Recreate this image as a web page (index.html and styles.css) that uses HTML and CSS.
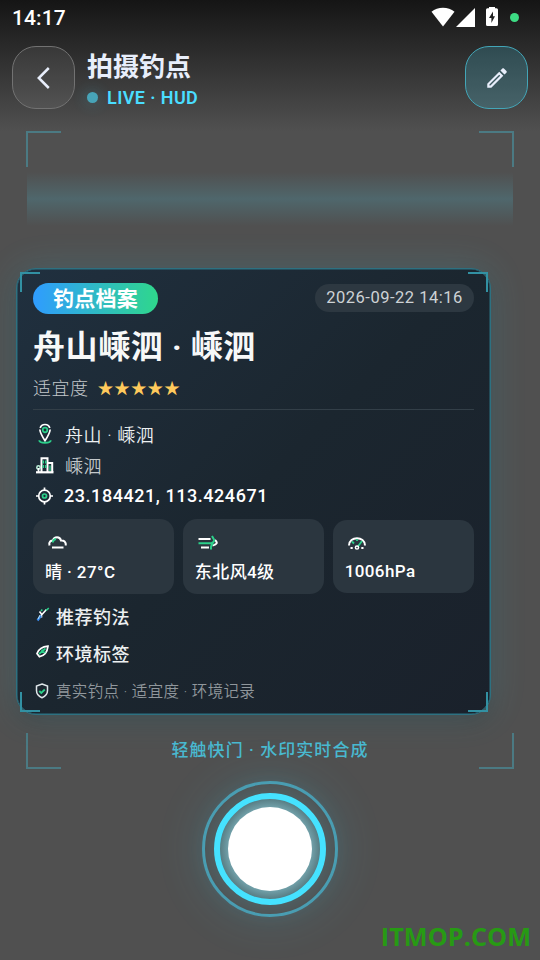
FILE: index.html
```html
<!DOCTYPE html>
<html lang="zh-CN">
<head>
<meta charset="utf-8">
<title>拍摄钓点</title>
<link rel="stylesheet" href="styles.css">
</head>
<body>
<div class="screen">
  <div class="status">
    <span class="time">14:17</span>
    <div class="status-icons">
      <svg class="wifi" width="24" height="20" viewBox="0 0 24 20"><path d="M12 19.500.5 4.800C3.700 2.200 7.600.8 12 .8s8.300 1.400 11.500 4z" fill="#fff"/></svg>
      <svg class="signal" width="19" height="19" viewBox="0 0 19 19"><path d="M0 19 19 0v19z" fill="#fff"/></svg>
      <svg class="battery" width="12" height="20" viewBox="0 0 12 20"><path d="M3 1.200V0h6v1.200h1.500Q12 1.200 12 2.700v14.800q0 1.500-1.500 1.500h-9Q0 19 0 17.500V2.700Q0 1.200 1.500 1.200z" fill="#fff"/><path d="M7 4.500 3 11h2.400v5L9 9.300H7z" fill="#222"/></svg>
      <i class="privacy"></i>
    </div>
  </div>
  <header class="topbar">
    <div class="btn"><svg width="24" height="24" viewBox="0 0 24 24"><path d="M16.800 2 6.800 12l10 10" fill="none" stroke="#e8eefb" stroke-width="2.500"/></svg></div>
    <div class="heading">
      <h1>拍摄钓点</h1>
      <div class="live"><i></i><span>LIVE · HUD</span></div>
    </div>
    <div class="btn edit"><svg width="26" height="26" viewBox="0 0 24 24"><path fill="#e8eefb" d="m14.060 9.020.92.92L5.920 19H5v-.92zM17.660 3c-.25 0-.51.1-.7.290l-1.830 1.830 3.750 3.750 1.830-1.830a1 1 0 0 0 0-1.410l-2.340-2.340c-.2-.2-.45-.29-.71-.29m-3.600 3.190L3 17.250V21h3.750L17.810 9.940z"/></svg></div>
  </header>
  <main class="finder">
    <i class="corner tl"></i><i class="corner tr"></i><i class="corner bl"></i><i class="corner br"></i>
    <div class="scan"></div>
    <section class="card">
      <i class="mark tl"></i><i class="mark tr"></i><i class="mark bl"></i><i class="mark br"></i>
      <div class="chips"><span class="chip">钓点档案</span><span class="date">2026-09-22 14:16</span></div>
      <h2>舟山嵊泗 · 嵊泗</h2>
      <div class="rating"><span>适宜度</span><span class="stars">★★★★★</span></div>
      <div class="row"><svg width="22" height="22" viewBox="0 0 22 22" fill="none" stroke-width="1.700"><path d="M6.200 5C7.500.3 14.500.3 15.800 5M5.800 6.500Q6.300 10.500 11 17.800 15.700 10.500 16.200 6.500" stroke="#fff"/><circle cx="11" cy="7" r="2.300" stroke="#2bd08a"/><path d="M5.300 17.300q0 2.500 5.700 2.500t5.700-2.500" stroke="#2bd08a" stroke-width="1.900"/></svg><span>舟山 · 嵊泗</span></div>
      <div class="row dim"><svg width="22" height="22" viewBox="0 0 22 22" fill="none" stroke-width="1.700"><path d="M2 18.300h17.500" stroke="#fff" stroke-width="2.200"/><path d="M7.500 18V4.200h6V18M13.500 9h4.700V18" stroke="#fff" stroke-width="2"/><path d="M9.300 6.500v8M11.800 6.500v8" stroke="#2bd08a" stroke-width="1.500" stroke-dasharray="3 1.500"/><path d="M16 11.500V17" stroke="#2bd08a" stroke-width="1.300"/><circle cx="4.500" cy="13.500" r="1.700" stroke="#bdf0d9" stroke-width="1.500"/><path d="M4.500 14v4" stroke="#fff"/></svg><span>嵊泗</span></div>
      <div class="row coords"><svg width="22" height="22" viewBox="0 0 22 22" fill="none" stroke-width="1.700"><circle cx="10.500" cy="11" r="5.800" stroke="#fff"/><path d="M10.500 2.500v3M10.500 16.500v3M2 11h3M16 11h3" stroke="#fff"/><circle cx="10.500" cy="11" r="2" stroke="#2bd08a"/></svg><span>23.184421, 113.424671</span></div>
      <div class="tiles">
        <div class="tile"><svg width="24" height="22" viewBox="0 0 24 22" fill="none" stroke-width="2"><path d="M4.500 13.500C3.500 9.500 6 8.500 8 8.500c1-4.500 7-4.500 8 0 3-.3 5 1.500 4.800 5M7 15.500h11.500" stroke="#fff"/><path d="M7.800 10.500Q8 7.500 11 7" stroke="#2bd08a"/></svg><span>晴 · 27°C</span></div>
        <div class="tile"><svg width="24" height="22" viewBox="0 0 24 22" fill="none" stroke-width="2"><path d="M3.500 7h12M6 15.500h8M20 8q4.500 4-2.500 5.500" stroke="#fff"/><path d="M3.500 11.200h13q4-2 2-4.500L17 4M18.500 11.500q-3 1-2.500 6" stroke="#2bd08a"/></svg><span>东北风4级</span></div>
        <div class="tile short"><svg width="24" height="22" viewBox="0 0 24 22" fill="none" stroke-width="2"><path d="M4 13.500C4 3.800 20 3.800 20 13.500" stroke="#fff"/><path d="m12.500 15 4.500-6M7 9.500l2 2M12 7v2" stroke="#2bd08a" stroke-width="1.800"/><circle cx="12" cy="15.500" r="1.600" stroke="#fff" stroke-width="1.500"/><path d="M5.500 16h2.200M16.300 16h2.200" stroke="#fff"/></svg><span>1006hPa</span></div>
      </div>
      <div class="tag"><svg width="18" height="18" viewBox="0 0 18 18" fill="none" stroke-width="1.600"><path d="m6.500 5.500 2 2.500v3.500M8.500 9l5-5.500" stroke="#fff"/><path d="m13 4.500 2.800-2.300M8 5l1.300-1.500" stroke="#2bd08a"/><path d="m8 9.500-3.500 5" stroke="#3a8df0" stroke-width="2.200"/><path d="m7 9-2 4" stroke="#dff" stroke-width=".8"/></svg><span>推荐钓法</span></div>
      <div class="tag second"><svg width="18" height="18" viewBox="0 0 18 18" fill="none" stroke-width="1.700"><path d="M15 3.200C10 3.700 6 5.200 4 10.500L6.500 13.700C12 12.700 14.300 9.200 15 3.200z" stroke="#fff"/><path d="m6 11 6.500-5.500M9 6.500v2.500l3.500.500" stroke="#2bd08a"/></svg><span>环境标签</span></div>
      <div class="proof"><svg width="18" height="18" viewBox="0 0 18 18" fill="none" stroke-width="1.500"><path d="m9 2 5.500 2v4.500q0 5-5.500 7.200Q3.500 13.500 3.500 8.500V4z" stroke="#dfe6ea"/><path d="m6.300 9 2 2 3.500-3.500" stroke="#2bd08a" stroke-width="1.800"/></svg><span>真实钓点 · 适宜度 · 环境记录</span></div>
    </section>
    <p class="hint">轻触快门 · 水印实时合成</p>
  </main>
  <div class="shutter"><div class="ring"><div class="core"></div></div></div>
  <div class="watermark">ITMOP.COM</div>
</div>
</body>
</html>
```
FILE: styles.css
```css
* { box-sizing: border-box; }
body { margin: 0; background: #505050; font-family: Roboto, "Noto Sans CJK SC", sans-serif; }
h1, h2, p { margin: 0; }
svg { display: block; flex: none; }
.screen { position: relative; width: 540px; height: 960px; overflow: hidden; display: flex; flex-direction: column; background: linear-gradient(#151515 0, #505050 131px); white-space: nowrap; }

.status { height: 36px; display: flex; justify-content: space-between; padding: 0 21px 0 12px; color: #fff; }
.time { font-size: 21px; font-weight: 500; line-height: 36px; letter-spacing: .1px; }
.status-icons { display: flex; align-items: flex-start; }
.wifi { margin-top: 7px; }
.signal { margin: 8px 0 0 1px; }
.battery { margin: 7px 0 0 11px; }
.privacy { width: 9px; height: 9px; margin: 13px 0 0 12px; border-radius: 50%; background: #3ddc84; }

.topbar { height: 94px; padding: 10px 12px 0; display: flex; align-items: flex-start; }
.btn { width: 63px; height: 63px; flex: none; display: flex; align-items: center; justify-content: center; border: 1px solid #727272; border-radius: 24px; background: rgba(255,255,255,.07); }
.edit { border-color: #43a6b8; background: rgba(74,222,255,.19); }
.heading { flex: 1; padding: 3px 0 0 12px; }
h1 { font-size: 26px; line-height: 36px; font-weight: 700; color: #e8eefb; }
.live { display: flex; align-items: center; gap: 9px; height: 25px; color: #4addff; font-size: 18px; font-weight: 600; letter-spacing: .4px; }
.live i { width: 11px; height: 11px; border-radius: 50%; background: #47a4b8; box-shadow: 0 0 14px 3px rgba(74,222,255,.14); margin-top: -1px; }

.finder { position: relative; width: 488px; height: 640px; flex: none; margin-left: 26px; padding-top: 42px; }
.corner { position: absolute; width: 35px; height: 36px; color: #4b7a83; }
.tl { left: 0; top: 0; }
.tr { right: 0; top: 0; }
.bl { left: 0; bottom: 0; }
.br { right: 0; bottom: 0; }
.corner.tl, .corner.tr { top: .5px; }
.corner.bl, .corner.br { bottom: 1px; }
.corner::before, .corner::after { content: ""; position: absolute; background: currentColor; }
.corner::before { left: 0; right: 0; height: 2px; }
.corner::after { top: 0; bottom: 0; width: 2px; }
.corner.tl::before, .corner.tr::before { top: 0; }
.corner.bl::before, .corner.br::before { bottom: 0; }
.corner.tl::after, .corner.bl::after { left: 0; }
.corner.tr::after, .corner.br::after { right: 0; }
.mark.tl { border-width: 2px 0 0 2px; }
.mark.tr { border-width: 2px 2px 0 0; }
.mark.bl { border-width: 0 0 2px 2px; }
.mark.br { border-width: 0 2px 2px 0; }
.mark.tl, .mark.tr { top: 1px; }
.mark.tl, .mark.bl { left: 1px; }
.scan { height: 54px; margin: 0 1px; background: linear-gradient(rgba(74,222,255,0), rgba(74,222,255,.16) 50%, rgba(74,222,255,0)); }

.card { position: relative; width: 475px; height: 447px; margin: 42px 0 0 -10px; padding: 13px 16px 0 16px; border: 1px solid #2d7181; border-radius: 20px; color: #fff; background: linear-gradient(135deg, #20303f 0%, #1b262f 50%, #1a212b 100%); box-shadow: inset 0 0 0 .5px #2d7181, 0 0 36px rgba(74,222,255,.16), 0 8px 20px rgba(0,0,0,.16); }
.mark { position: absolute; width: 20px; height: 20px; margin: 2px; border: 0 solid #3291a3; }
.chips { display: flex; align-items: center; justify-content: space-between; height: 32px; }
.chip { width: 125px; height: 31px; border-radius: 16px; text-align: center; font-size: 21px; line-height: 33px; font-weight: 700; background: linear-gradient(90deg, #2f9cff, #2fd78c); letter-spacing: .3px; }
.date { width: 159px; height: 28px; border-radius: 14px; text-align: center; font-size: 16.500px; line-height: 28px; letter-spacing: .5px; color: #cdd2d5; background: #2d3841; }
h2 { font-size: 32px; line-height: 48px; font-weight: 700; letter-spacing: .6px; color: #f7f8f8; margin-top: 9px; }
.rating { display: flex; align-items: center; height: 39px; padding-bottom: 7px; border-bottom: 1px solid #333f48; font-size: 18px; letter-spacing: .5px; font-weight: 300; color: #c3c8cb; }
.stars { margin-left: 9px; color: #ffca5c; font: 16px/33px "Noto Sans CJK SC", sans-serif; letter-spacing: .6px; padding-top: 2px; }
.row { display: flex; align-items: center; height: 31px; gap: 9px; padding-left: 1px; font-size: 18px; font-weight: 350; letter-spacing: .6px; color: #edf0f1; }
.rating + .row { margin-top: 8px; }
.dim { color: #c3c8cb; }
.coords { font-size: 18px; font-weight: 500; color: #fff; letter-spacing: .55px; gap: 8px; }
.tiles { display: grid; grid-template-columns: repeat(3, 1fr); gap: 8.500px; align-items: center; margin-top: 8px; }
.tile { height: 75px; padding: 13px 0 0 12px; border-radius: 14px; background: #2b363f; font-size: 17px; font-weight: 500; letter-spacing: .4px; }
.tile svg { margin-bottom: 4px; }
.tile span { display: block; line-height: 28px; }
.short { height: 73px; padding-top: 12px; }
.short svg { margin-bottom: 3px; }
.tag, .proof { display: flex; align-items: center; gap: 5px; height: 37px; font-size: 18px; letter-spacing: .5px; color: #edf0f1; }
.tag { font-weight: 500; margin-top: 3px; }
.tag.second { margin-top: 0; }
.tag svg { margin-top: -2px; }
.proof { font-size: 15.500px; font-weight: 350; letter-spacing: .35px; color: #90979c; }
.proof svg { margin-top: 2px; }
.hint { margin: 23px 0 0 0; text-align: center; font-size: 17px; line-height: 24px; font-weight: 500; letter-spacing: 1.060px; color: #49b9d0; }

.shutter { width: 136px; height: 136px; flex: none; margin: 11px auto 0; padding: 9px; border: 3px solid #4a9baf; border-radius: 50%; box-shadow: 0 0 50px rgba(74,222,255,.14); }
.ring { width: 112px; height: 112px; padding: 8px; border: 6px solid #45e2ff; border-radius: 50%; background: radial-gradient(circle, #709fa8 42px, #53757b 52px); box-shadow: 0 0 28px rgba(74,222,255,.22); }
.core { width: 84px; height: 84px; border-radius: 50%; background: #fff; }
.watermark { position: absolute; right: 9px; bottom: 8px; font: 700 25.300px/32px "Open Sans", sans-serif; color: #279a14; }
```
